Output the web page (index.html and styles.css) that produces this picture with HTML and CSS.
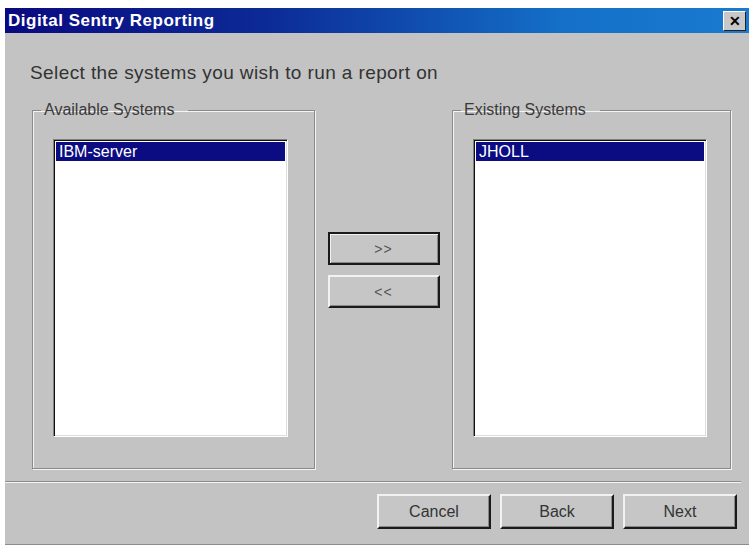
FILE: index.html
```html
<!DOCTYPE html>
<html>
<head>
    <link rel="stylesheet" href="styles.css">
</head>
<body>
    <div class="window">
        <div class="titlebar">
            <span class="title">Digital Sentry Reporting</span>
            <span class="close">&#x2715;</span>
        </div>
        <div class="content">
            <div class="prompt">Select the systems you wish to run a report on</div>
            <div class="lists">
                <fieldset class="group group-left">
                    <legend>Available Systems</legend>
                    <div class="listbox">
                        <div class="item selected">IBM-server</div>
                    </div>
                </fieldset>
                <div class="movers">
                    <button class="btn btn-default">&gt;&gt;</button>
                    <button class="btn">&lt;&lt;</button>
                </div>
                <fieldset class="group group-right">
                    <legend>Existing Systems</legend>
                    <div class="listbox listbox-right">
                        <div class="item selected">JHOLL</div>
                    </div>
                </fieldset>
            </div>
        </div>
        <div class="separator"></div>
        <div class="actions">
            <button class="btn btn-wide">Cancel</button>
            <button class="btn btn-wide">Back</button>
            <button class="btn btn-wide">Next</button>
        </div>
    </div>
</body>
</html>
```

FILE: styles.css
```css
html, body {
    margin: 0;
    background: #fff;
}
body {
    font-family: "Liberation Sans", Arial, sans-serif;
    color: #2a2a2a;
}
.window {
    margin: 8px 0 0 5px;
    width: 744px;
    height: 537px;
    background: #c3c3c3;
    box-sizing: border-box;
    border-bottom: 1px solid #8c8c8c;
    display: flex;
    flex-direction: column;
}

/* title bar */
.titlebar {
    height: 25px;
    background: linear-gradient(to right, #0a0a80 0%, #0c2a96 35%, #1470c8 75%, #1a7ad0 100%);
    display: flex;
    align-items: center;
    justify-content: space-between;
    padding: 0 3px 0 3px;
}
.title {
    color: #fff;
    font-weight: bold;
    font-size: 17px;
    letter-spacing: 0.5px;
}
.close {
    width: 21px;
    height: 18px;
    background: #c8c8c8;
    border-top: 1px solid #fff;
    border-left: 1px solid #fff;
    border-right: 1px solid #202020;
    border-bottom: 1px solid #202020;
    display: flex;
    align-items: center;
    justify-content: center;
    font-size: 14px;
    font-weight: bold;
    color: #000;
    line-height: 1;
}

/* main area */
.content {
    padding: 30px 0 0 27px;
}
.prompt {
    font-size: 19px;
    line-height: 20px;
    letter-spacing: 0.4px;
    color: #333;
    margin-left: -2px;
}
.lists {
    display: flex;
    margin-top: 18px;
}
.group {
    margin: 0;
    padding: 20px 0 31px 20px;
    border: 1px solid #8a8a8a;
    box-shadow: inset 1px 1px 0 #f4f4f4, 1px 1px 0 #f4f4f4;
    min-width: 0;
}
.group-left {
    width: 283px;
    box-sizing: border-box;
}
.group-right {
    width: 279px;
    box-sizing: border-box;
}
legend {
    font-size: 16px;
    line-height: 18px;
    color: #3a3a3a;
    padding: 0 14px 0 3px;
    margin-left: -12px;
}
.listbox {
    width: 235px;
    height: 298px;
    box-sizing: border-box;
    background: #fff;
    border-top: 1px solid #808080;
    border-left: 1px solid #808080;
    border-right: 1px solid #fff;
    border-bottom: 1px solid #fff;
    box-shadow: inset 1px 1px 0 #111, inset -1px -1px 0 #dcdcdc;
    padding: 2px 2px;
}
.listbox-right {
    width: 234px;
}
.item {
    height: 19px;
    line-height: 19px;
    font-size: 16px;
    padding-left: 3px;
}
.selected {
    background: #0c0c82;
    color: #fff;
}

.movers {
    width: 137px;
    display: flex;
    flex-direction: column;
    align-items: center;
    gap: 10px;
    padding-top: 131px;
}

/* buttons */
.btn {
    width: 112px;
    height: 33px;
    background: #c6c6c6;
    font-family: "Liberation Sans", Arial, sans-serif;
    font-size: 14px;
    color: #555;
    border-top: 2px solid #f2f2f2;
    border-left: 2px solid #f2f2f2;
    border-right: 2px solid #1a1a1a;
    border-bottom: 2px solid #1a1a1a;
    box-shadow: inset -1px -1px 0 #888;
    padding: 0;
    letter-spacing: 1px;
}
.btn-default {
    border: 2px solid #1a1a1a;
    box-shadow: inset 1px 1px 0 #f2f2f2, inset -1px -1px 0 #888;
}

.separator {
    margin-top: 12px;
    width: 736px;
    height: 1px;
    background: #8c8c8c;
    border-bottom: 1px solid #f4f4f4;
}

.actions {
    display: flex;
    justify-content: flex-end;
    gap: 9px;
    padding: 11px 12px 0 0;
}
.btn-wide {
    width: 114px;
    height: 35px;
    font-size: 16px;
    letter-spacing: 0;
    color: #333;
}
```
